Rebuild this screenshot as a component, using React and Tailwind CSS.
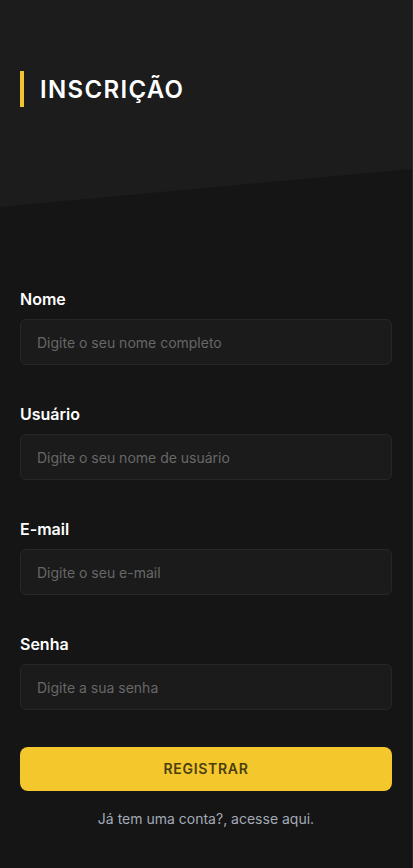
export default function App() {
  const fields = [
    { label: "Nome", ph: "Digite o seu nome completo" },
    { label: "Usuário", ph: "Digite o seu nome de usuário" },
    { label: "E-mail", ph: "Digite o seu e-mail" },
    { label: "Senha", ph: "Digite a sua senha" },
  ];
  return (
    <div className="min-h-[868px] bg-[#151515] font-['Inter',sans-serif] border-r border-[#2a2a2a]">
      <div className="h-[207px] bg-[#1c1c1c] [clip-path:polygon(0_0,100%_0,100%_81.6%,0_100%)] px-5 pt-[71px]">
        <div className="flex h-9 items-center border-l-4 border-[#f4c430] pl-4">
          <h1 className="mt-0.5 text-[24px] font-semibold tracking-[0.055em] text-white">INSCRIÇÃO</h1>
        </div>
      </div>
      <form className="px-5 pt-[80px]">
        {fields.map((f) => (
          <div key={f.label} className="mb-[37px]">
            <label className="mb-2 block text-base font-semibold leading-6 text-white">{f.label}</label>
            <input
              placeholder={f.ph}
              type={f.label === "Senha" ? "password" : "text"}
              className="block h-[46px] w-full rounded-md border border-[#272727] bg-[#1b1b1b] px-4 text-sm text-white placeholder:text-[#676767] outline-none"
            />
          </div>
        ))}
        <button
          type="button"
          className="block h-[44px] w-full rounded-lg bg-[#f4c72c] text-sm font-semibold tracking-wider text-[#4a3f0c]"
        >
          REGISTRAR
        </button>
        <p className="mt-[18px] text-center text-sm leading-5 text-[#a3aab5]">Já tem uma conta?, acesse aqui.</p>
      </form>
    </div>
  );
}
